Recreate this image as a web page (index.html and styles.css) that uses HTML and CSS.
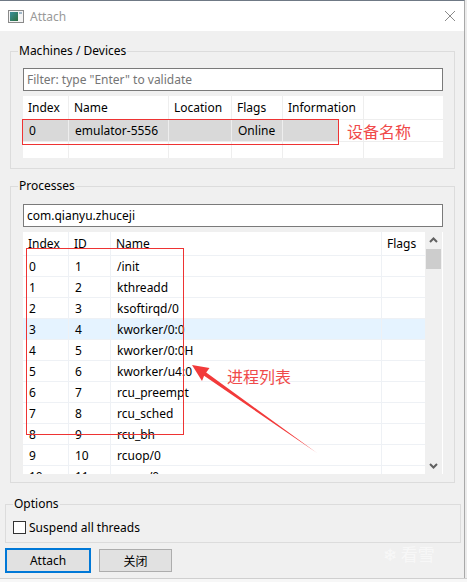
FILE: index.html
```html
<!DOCTYPE html>
<html>
<head>
<meta charset="utf-8">
<link rel="stylesheet" href="styles.css">
</head>
<body>
<div class="screen">
  <div class="window">
    <div class="titlebar">
      <svg class="app-icon" width="16" height="13" viewBox="0 0 16 13">
        <rect x="0.5" y="0.5" width="15" height="12" fill="#f4f4f4" stroke="#8a8a8a"/>
        <defs><linearGradient id="g" x1="0" y1="0" x2="1" y2="1"><stop offset="0" stop-color="#3a8f9c"/><stop offset="1" stop-color="#2d6e3e"/></linearGradient></defs>
        <rect x="2" y="2" width="8" height="9" fill="url(#g)"/>
        <rect x="11" y="2" width="3" height="2" fill="#9fb7c9"/>
      </svg>
      <span class="title">Attach</span>
      <svg class="close" width="12" height="12" viewBox="0 0 12 12">
        <path d="M1 1 L11 11 M11 1 L1 11" stroke="#8a8a8a" stroke-width="1" fill="none"/>
      </svg>
    </div>
    <div class="content">
      <fieldset class="group machines">
        <legend>Machines / Devices</legend>
        <div class="group-body">
          <div class="input placeholder">Filter: type "Enter" to validate</div>
          <div class="dev-table">
            <div class="cell hd">Index</div><div class="cell hd">Name</div><div class="cell hd">Location</div><div class="cell hd">Flags</div><div class="cell hd">Information</div><div class="cell hd"></div>
            <div class="cell sel">0</div><div class="cell sel">emulator-5556</div><div class="cell sel"></div><div class="cell sel">Online</div><div class="cell sel-part"></div><div class="cell"></div>
            <div class="cell"></div><div class="cell"></div><div class="cell"></div><div class="cell"></div><div class="cell"></div><div class="cell"></div>
          </div>
        </div>
      </fieldset>
      <fieldset class="group processes">
        <legend>Processes</legend>
        <div class="group-body">
          <div class="input">com.qianyu.zhuceji</div>
          <div class="proc-wrap">
            <div class="proc-table">
              <div class="cell hd">Index</div><div class="cell hd">ID</div><div class="cell hd">Name</div><div class="cell hd">Flags</div>
              <div class="cell">0</div><div class="cell">1</div><div class="cell">/init</div><div class="cell"></div>
              <div class="cell">1</div><div class="cell">2</div><div class="cell">kthreadd</div><div class="cell"></div>
              <div class="cell">2</div><div class="cell">3</div><div class="cell">ksoftirqd/0</div><div class="cell"></div>
              <div class="cell hl">3</div><div class="cell hl">4</div><div class="cell hl">kworker/0:0</div><div class="cell hl"></div>
              <div class="cell">4</div><div class="cell">5</div><div class="cell">kworker/0:0H</div><div class="cell"></div>
              <div class="cell">5</div><div class="cell">6</div><div class="cell">kworker/u4:0</div><div class="cell"></div>
              <div class="cell">6</div><div class="cell">7</div><div class="cell">rcu_preempt</div><div class="cell"></div>
              <div class="cell">7</div><div class="cell">8</div><div class="cell">rcu_sched</div><div class="cell"></div>
              <div class="cell">8</div><div class="cell">9</div><div class="cell">rcu_bh</div><div class="cell"></div>
              <div class="cell">9</div><div class="cell">10</div><div class="cell">rcuop/0</div><div class="cell"></div>
              <div class="cell">10</div><div class="cell">11</div><div class="cell">rcuos/0</div><div class="cell"></div>
            </div>
            <div class="scrollbar">
              <svg class="arrow" width="17" height="17" viewBox="0 0 17 17"><path d="M5 10 L8.5 6.5 L12 10" stroke="#606060" stroke-width="2" fill="none"/></svg>
              <div class="thumb"></div>
              <div class="track"></div>
              <svg class="arrow" width="17" height="17" viewBox="0 0 17 17"><path d="M5 7 L8.5 10.5 L12 7" stroke="#606060" stroke-width="2" fill="none"/></svg>
            </div>
          </div>
        </div>
      </fieldset>
      <fieldset class="group options">
        <legend>Options</legend>
        <div class="group-body opt-body">
          <span class="checkbox"></span><span>Suspend all threads</span>
        </div>
      </fieldset>
      <div class="buttons">
        <div class="btn default">Attach</div>
        <div class="btn">关闭</div>
      </div>
    </div>
    <div class="mark box1"></div>
    <div class="mark box2"></div>
    <div class="note note1">设备名称</div>
    <div class="note note2">进程列表</div>
    <svg class="arrow-note" width="467" height="582" viewBox="0 0 467 582">
      <polygon points="192,365 209.5,368 206.2,372.4 317,453 204.1,375.8 202,381" fill="#f23a3a"/>
    </svg>
    <div class="watermark">❄ 看雪</div>
  </div>
  <div class="under"></div>
</div>
</body>
</html>
```
FILE: styles.css
```css
* { box-sizing: border-box; }
html, body { margin: 0; padding: 0; }
body {
  width: 467px; height: 582px; overflow: hidden;
  background: #ebebeb;
  font-family: "Noto Sans", "Noto Sans CJK SC", sans-serif;
  font-size: 12px; color: #000;
}
.screen { width: 467px; height: 582px; }
.window {
  position: relative;
  width: 465px; height: 578px;
  border-top: 1px solid #6f7985;
  border-right: 1px solid #a8a8a8;
  background: #f0f0f0;
  display: flex; flex-direction: column;
}
.titlebar {
  height: 30px; background: #fff;
  display: flex; align-items: center;
  padding-left: 8px;
}
.app-icon { display: block; }
.title { margin-left: 6px; color: #999; font-size: 12px; }
.close { margin-left: auto; margin-right: 8px; display: block; }
.content { flex: 1; display: flex; flex-direction: column; }
.group {
  margin: 0; padding: 0; min-inline-size: 0;
  border: 1px solid #dcdcdc;
}
.group legend { padding: 0 1px; margin-left: 7px; line-height: 16px; font-size: 12px; }
.machines { margin: 12px 0 0 10px; width: 445px; }
.machines .group-body { padding-top: 9px; }
.processes { margin: 9px 0 0 10px; width: 445px; }
.processes .group-body { padding-bottom: 8px; }
.options { margin: 13px 0 0 5px; width: 456px; }
.group-body { padding: 10px 11px 10px 12px; }
.input {
  height: 23px; border: 1px solid #7a7a7a; background: #fff;
  padding-left: 3px; line-height: 21px; white-space: nowrap;
}
.placeholder { color: #757575; }
.dev-table {
  margin-top: 5px; height: 62px;
  display: grid;
  grid-template-columns: 45px 99px 62px 50px 80px 1fr;
  grid-template-rows: 23px 21px 16px;
  gap: 1px;
  background: #eeeeee;
}
.cell { background: #fff; padding-left: 6px; white-space: nowrap; overflow: hidden; display: flex; align-items: center; }
.dev-table .hd { padding-left: 5px; }
.sel { background: #d9d9d9; }
.sel-part { background: linear-gradient(to right, #d9d9d9 55px, #fff 55px); }
.proc-wrap { margin-top: 5px; height: 242px; display: flex; background: #fff; }
.proc-table {
  width: 402px; height: 242px; overflow: hidden;
  display: grid;
  grid-template-columns: 45px 41px 270px 43px;
  grid-template-rows: 23px repeat(11, 20px);
  gap: 1px;
  background: #eef1f5;
}
.proc-table .hd { padding-left: 5px; }
.hl { background: #e5f3ff; }
.scrollbar { width: 17px; background: #f0f0f0; display: flex; flex-direction: column; }
.arrow { display: block; flex: none; }
.thumb { height: 20px; margin: 0 1px; background: #cdcdcd; flex: none; }
.track { flex: 1; }
.opt-body { padding: 7px 7px 6px 7px; display: flex; align-items: center; }
.checkbox { width: 13px; height: 13px; border: 1px solid #333; background: #fff; margin-right: 3px; }
.buttons { display: flex; align-items: center; gap: 8px; margin: 5px 0 0 5px; }
.btn {
  height: 23px; width: 73px; border: 1px solid #adadad; background: #e1e1e1;
  display: flex; align-items: center; justify-content: center;
}
.btn.default { width: 86px; height: 25px; border: 2px solid #0078d7; }
.mark { position: absolute; border: 1px solid #ee3333; }
.box1 { left: 22px; top: 118px; width: 317px; height: 26px; }
.box2 { left: 26px; top: 247px; width: 158px; height: 187px; }
.note { position: absolute; color: #f04a4a; font-size: 16px; line-height: 20px; font-family: "Noto Sans CJK SC", sans-serif; }
.note1 { left: 347px; top: 120px; }
.note2 { left: 227px; top: 365px; }
.arrow-note { position: absolute; left: 0; top: -1px; pointer-events: none; }
.watermark { position: absolute; left: 383px; top: 540px; font-size: 17px; color: rgba(255,255,255,0.55); font-family: "Noto Sans CJK SC", sans-serif; }
.under { height: 4px; background: #f7f7f7; border-top: 1px solid #cfcfcf; }
```
